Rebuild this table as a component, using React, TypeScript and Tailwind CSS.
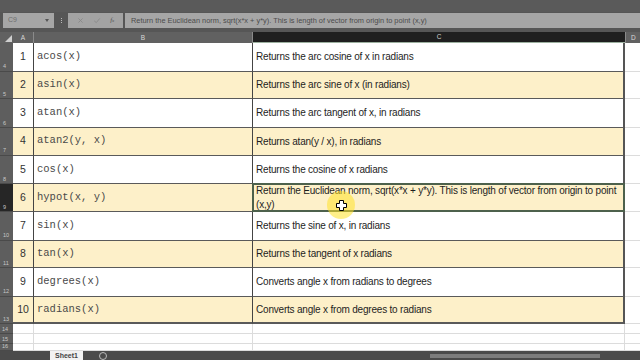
import React from "react";

const rows: { n: number; f: string; d: string[]; h: number }[] = [
  { n: 1, f: "acos(x)", d: ["Returns the arc cosine of x in radians"], h: 29 },
  { n: 2, f: "asin(x)", d: ["Returns the arc sine of x (in radians)"], h: 28 },
  { n: 3, f: "atan(x)", d: ["Returns the arc tangent of x, in radians"], h: 29 },
  { n: 4, f: "atan2(y, x)", d: ["Returns atan(y / x), in radians"], h: 28 },
  { n: 5, f: "cos(x)", d: ["Returns the cosine of x radians"], h: 29 },
  {
    n: 6,
    f: "hypot(x, y)",
    d: [
      "Return the Euclidean norm, sqrt(x*x + y*y). This is length of vector from origin to point",
      "(x,y)",
    ],
    h: 28,
  },
  { n: 7, f: "sin(x)", d: ["Returns the sine of x, in radians"], h: 29 },
  { n: 8, f: "tan(x)", d: ["Returns the tangent of x radians"], h: 28 },
  { n: 9, f: "degrees(x)", d: ["Converts angle x from radians to degrees"], h: 29 },
  { n: 10, f: "radians(x)", d: ["Converts angle x from degrees to radians"], h: 28 },
];

export default function App() {
  return (
    <div
      className="w-[640px] h-[360px] overflow-hidden bg-[#5a5a5a] flex flex-col relative"
      style={{ fontFamily: '"Liberation Sans", Arial, sans-serif' }}
    >
      {/* top strip */}
      <div className="h-[12px] bg-[#5a5a5a]" />
      {/* formula bar */}
      <div className="h-[17px] flex items-center bg-[#565656]">
        <div className="ml-[3px] w-[51px] h-[15px] bg-[#a6a6a6] flex items-center justify-between px-[5px]">
          <span className="text-[7px] text-[#6e6e6e]">C9</span>
          <span className="w-0 h-0 border-l-[2px] border-r-[2px] border-t-[3px] border-l-transparent border-r-transparent border-t-[#555]" />
        </div>
        <div className="w-[14px] flex flex-col items-center gap-[1px]">
          <span className="w-[1px] h-[1px] bg-[#bbb]" />
          <span className="w-[1px] h-[1px] bg-[#bbb]" />
          <span className="w-[1px] h-[1px] bg-[#bbb]" />
        </div>
        <div className="w-[55px] h-[15px] bg-[#a3a3a3] flex items-center justify-around px-[4px] text-[#878787]">
          <svg width="7" height="7" viewBox="0 0 10 10">
            <path d="M2 2 L8 8 M8 2 L2 8" stroke="#888" strokeWidth="1.2" />
          </svg>
          <svg width="8" height="7" viewBox="0 0 10 10">
            <path d="M1 5.5 L4 8 L9 2" stroke="#888" strokeWidth="1.2" fill="none" />
          </svg>
          <span className="text-[7px] italic text-[#555]" style={{ fontFamily: '"Liberation Serif", serif' }}>
            f<span className="text-[5px]">x</span>
          </span>
        </div>
        <div className="ml-[2px] flex-1 h-[15px] bg-[#a6a6a6] flex items-center pl-[6px]">
          <span className="text-[7.4px] text-[#4c4c4c] whitespace-nowrap">
            Return the Euclidean norm, sqrt(x*x + y*y). This is length of vector from origin to point (x,y)
          </span>
        </div>
      </div>
      <div className="h-[3px] bg-[#565656]" />
      {/* column headers */}
      <div className="h-[12px] flex bg-[#616161] text-[6.5px] text-[#d8d8d8]">
        <div className="w-[13px] relative">
          <span
            className="absolute right-[1px] bottom-[1px] w-0 h-0"
            style={{ borderBottom: "7px solid #cfcfcf", borderLeft: "7px solid transparent" }}
          />
        </div>
        <div className="w-[21px] flex items-center justify-center border-r border-[#8a8a8a]">A</div>
        <div className="w-[219px] flex items-center justify-center border-r border-[#8a8a8a]">B</div>
        <div className="w-[372px] flex items-center justify-center bg-[#1f1f1f] text-[#cfcfcf] border-b border-[#9cb09f]">C</div>
        <div className="flex-1 flex items-center pl-[5px] border-l border-[#8a8a8a]">D</div>
      </div>
      {/* data rows */}
      {rows.map((r, i) => {
        const even = i % 2 === 1;
        const bg = even ? "bg-[#fdf0c9]" : "bg-white";
        const sel = r.n === 6;
        const last = i === rows.length - 1;
        return (
          <div key={r.n} className="flex" style={{ height: r.h }}>
            <div
              className={`w-[13px] relative border-b border-[#4a4a4a] ${sel ? "bg-[#262626]" : "bg-[#5e5e5e]"}`}
            >
              <span className="absolute left-[3px] bottom-[1px] text-[5.5px] leading-none text-[#c8c8c8]">
                {r.n + 3}
              </span>
            </div>
            <div
              className={`w-[21px] ${bg} border-r border-[#444] ${last ? "border-b-2" : "border-b"} border-b-[#5a5a5a] flex items-center justify-center text-[10.5px] text-[#333]`}
            >
              {r.n}
            </div>
            <div
              className={`w-[219px] ${bg} border-r border-[#444] ${last ? "border-b-2" : "border-b"} border-b-[#5a5a5a] flex items-center pl-[3px] text-[10.5px] text-[#4a4a4a]`}
              style={{ fontFamily: '"Liberation Mono", "Courier New", monospace' }}
            >
              {r.f}
            </div>
            <div
              className={`w-[372px] ${bg} border-r-2 border-r-[#555] ${last ? "border-b-2" : "border-b"} border-b-[#5a5a5a] relative flex flex-col justify-center pl-[3px] text-[10px] tracking-[-0.2px] leading-[13.5px] text-[#1e1e1e]`}
            >
              {r.d.map((t) => (
                <span key={t} className="block whitespace-nowrap">
                  {t}
                </span>
              ))}
              {sel && (
                <span className="absolute left-[-1px] top-[-1px] right-[-2px] bottom-[-1px] border-2 border-[#4d614c]" />
              )}
            </div>
            <div className="flex-1 bg-white border-b border-[#dcdcdc]" />
          </div>
        );
      })}
      {/* empty rows */}
      {[14, 15, 16].map((n, i) => (
        <div key={n} className="flex" style={{ height: i === 2 ? 7 : 10 }}>
          <div className="w-[13px] relative bg-[#5e5e5e] border-b border-[#4a4a4a]">
            <span className="absolute left-[2px] bottom-[1px] text-[5.5px] leading-none text-[#c8c8c8]">{n}</span>
          </div>
          <div className="w-[21px] bg-white border-r border-b border-[#dcdcdc]" />
          <div className="w-[219px] bg-white border-r border-b border-[#dcdcdc]" />
          <div className="w-[372px] bg-white border-r border-b border-[#dcdcdc]" />
          <div className="flex-1 bg-white border-b border-[#dcdcdc]" />
        </div>
      ))}
      {/* sheet tabs */}
      <div className="flex-1 bg-[#4b4b4b] flex items-start relative">
        <div className="ml-[50px] w-[33px] h-full bg-[#f2f2f2] flex justify-center">
          <span className="text-[7px] leading-[9px] text-[#444] font-bold">Sheet1</span>
        </div>
        <div className="ml-[16px] mt-[1px] w-[8px] h-[8px] rounded-full border border-[#bbb]" />
        <div className="absolute left-[430px] top-[3px] right-[40px] h-[4px] bg-[#7d7d7d]" />
      </div>
      {/* mouse cursor with highlight */}
      <div className="absolute left-[327px] top-[191px] w-[28px] h-[28px] rounded-full bg-[rgba(255,226,40,0.55)] flex items-center justify-center">
        <svg width="11" height="11" viewBox="0 0 11 11">
          <path
            d="M3.5 0.5 H7.5 V3.5 H10.5 V7.5 H7.5 V10.5 H3.5 V7.5 H0.5 V3.5 H3.5 Z"
            fill="#fff"
            stroke="#000"
            strokeWidth="1"
          />
        </svg>
      </div>
    </div>
  );
}
